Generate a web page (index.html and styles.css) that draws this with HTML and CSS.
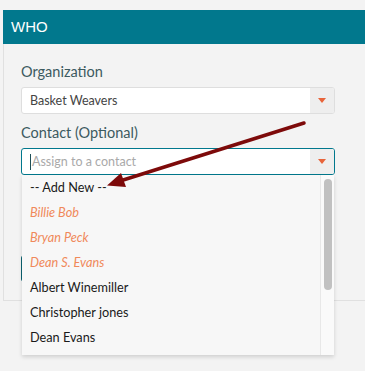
FILE: index.html
```html
<!DOCTYPE html>
<html lang="en">
    <head>
        <meta charset="UTF-8" />
        <meta name="viewport" content="width=device-width, initial-scale=1.0" />
        <title>Who</title>
        <link rel="stylesheet" href="styles.css">
    </head>
    <body>
        <div class="panel">
            <div class="panel-header">WHO</div>
            <div class="panel-body">
                <div class="field">
                    <label class="field-label">Organization</label>
                    <div class="select">
                        <span class="select-value">Basket Weavers</span>
                        <span class="select-arrow"><span class="triangle"></span></span>
                    </div>
                </div>

                <div class="field">
                    <label class="field-label">Contact (Optional)</label>
                    <div class="combo">
                        <div class="select select-focus">
                            <span class="select-placeholder"><span class="caret"></span>Assign to a contact</span>
                            <span class="select-arrow"><span class="triangle"></span></span>
                        </div>
                        <div class="dropdown">
                            <ul class="options">
                                <li>-- Add New --</li>
                                <li class="suggested">Billie Bob</li>
                                <li class="suggested">Bryan Peck</li>
                                <li class="suggested">Dean S. Evans</li>
                                <li>Albert Winemiller</li>
                                <li>Christopher jones</li>
                                <li>Dean Evans</li>
                            </ul>
                            <div class="scrollbar"><div class="scrollbar-thumb"></div></div>
                        </div>
                    </div>
                </div>

                <!-- save button sits behind the open dropdown -->
                <div class="form-actions">
                    <button class="btn" aria-label="Save"></button>
                </div>
            </div>
        </div>

        <!-- annotation arrow drawn over the form -->
        <svg class="annotation" width="365" height="371" viewBox="0 0 365 371">
            <line x1="304" y1="123" x2="120" y2="181" stroke="#7d0a0a" stroke-width="3.5" stroke-linecap="round" />
            <polygon points="107,185.5 126,187 121,173" fill="#7d0a0a" />
        </svg>
    </body>
</html>
```

FILE: styles.css
```css
html,
body {
    height: 100%;
}
body {
    margin: 0;
    padding: 10px 0 0 3px;
    box-sizing: border-box;
    background-color: #f3f3f3;
    font-family: Lato, "Open Sans", sans-serif;
    overflow: hidden;
}
.panel-header {
    height: 34px;
    line-height: 34px;
    padding-left: 8px;
    background: #01788d;
    color: #fff;
    font-family: "Liberation Sans", Arial, sans-serif;
    font-size: 15px;
}
.panel-body {
    padding: 18px 30px 18px 17px;
    border-left: 1px solid #e0e0e0;
    border-bottom: 1px solid #e0e0e0;
}
.field {
    margin-bottom: 9px;
}
.field-label {
    display: block;
    margin-bottom: 5px;
    line-height: 20px;
    font-size: 14.5px;
    color: #3c5a5f;
}
.combo {
    position: relative;
}
.select {
    display: flex;
    height: 27px;
    box-sizing: border-box;
    background: #fff;
    border: 1px solid #dedede;
    border-radius: 3px;
    overflow: hidden;
}
.select-focus {
    border-color: #01788d;
}
.select-value,
.select-placeholder {
    flex: 1;
    display: flex;
    align-items: center;
    padding-left: 8px;
    font-size: 12.5px;
    color: #444;
}
.select-placeholder {
    color: #a9a9a9;
}
.caret {
    display: inline-block;
    width: 1px;
    height: 16px;
    margin-right: 1px;
    background: #1f4f57;
}
.select-arrow {
    width: 24px;
    display: flex;
    align-items: center;
    justify-content: center;
    background: #eeeeee;
}
.triangle {
    width: 0;
    height: 0;
    border-left: 4px solid transparent;
    border-right: 4px solid transparent;
    border-top: 5px solid #e8643a;
}
.dropdown {
    position: absolute;
    top: 100%;
    left: 1px;
    right: 1px;
    z-index: 2;
    display: flex;
    height: 180px;
    background: #f7f7f7;
    box-shadow: 0 2px 4px rgba(0, 0, 0, 0.15);
    overflow: hidden;
}
.options {
    flex: 1;
    margin: 0;
    padding: 0;
    list-style: none;
}
.options li {
    height: 25px;
    line-height: 25px;
    padding-left: 8px;
    font-size: 12.7px;
    color: #1a1a1a;
}
.options .suggested {
    font-style: italic;
    color: #f0895a;
}
.scrollbar {
    width: 13px;
    padding-top: 4px;
    background: #fafafa;
    border-left: 1px solid #e8e8e8;
}
.scrollbar-thumb {
    width: 8px;
    height: 111px;
    margin-left: 3px;
    border-radius: 4px;
    background: #c1c1c1;
}
.form-actions {
    margin-top: 80px;
}
.btn {
    display: block;
    width: 80px;
    height: 27px;
    border: 1px solid #0b6270;
    border-radius: 3px;
    background: #01788d;
}
.annotation {
    position: absolute;
    top: 0;
    left: 0;
    z-index: 3;
    pointer-events: none;
}
```
